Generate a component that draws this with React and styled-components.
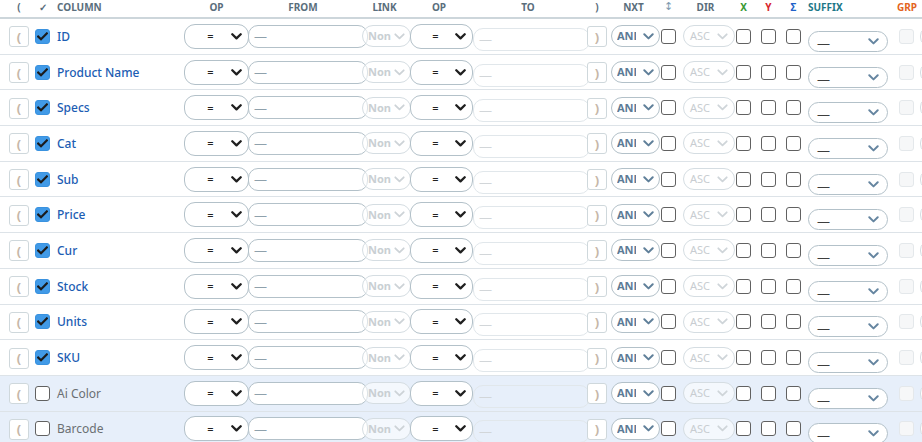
import React from "react";
import styled, { createGlobalStyle, css } from "styled-components";

const GlobalStyle = createGlobalStyle`
  html, body {
    margin: 0;
    padding: 0;
    background: #ffffff;
    overflow: hidden;
  }
  body {
    font-family: "Noto Sans", "Open Sans", Arial, sans-serif;
  }
`;

const gridCols = css`
  display: grid;
  grid-template-columns: 26px 22px 127px 64px 114px 48px 63px 114px 24px 50px 22px 53px 25px 25px 22px 91px 21px 1fr;
  padding-left: 9px;
  align-items: center;
`;

const Table = styled.div`
  width: 922px;
`;

const HeadRow = styled.div`
  ${gridCols};
  height: 17px;
  border-bottom: 2px solid #cdd6db;
  box-sizing: content-box;
`;

const HeadLabel = styled.div`
  width: ${(p) => p.$w}px;
  margin-left: ${(p) => p.$ml || 0}px;
  text-align: ${(p) => p.$align || "center"};
  font-family: ${(p) => (p.$glyph ? '"DejaVu Sans", sans-serif' : "inherit")};
  font-size: ${(p) => (p.$glyph ? 11 : 10)}px;
  font-weight: ${(p) => (p.$glyph ? 400 : 700)};
  line-height: 12px;
  margin-top: -4px;
  color: ${(p) => p.$color || "#5a6e7c"};
  white-space: nowrap;
`;

const Row = styled.div`
  ${gridCols};
  height: 35.7px;
  box-sizing: border-box;
  border-bottom: 1px solid #dde3e8;
  background: ${(p) => (p.$muted ? "#e7effa" : "#ffffff")};
`;

const ParenBtn = styled.div`
  width: 20px;
  height: 21px;
  box-sizing: border-box;
  border: 1px solid #cfd8dc;
  border-radius: 3px;
  background: #ffffff;
  display: flex;
  align-items: center;
  justify-content: center;
  font-size: 13px;
  font-weight: 700;
  color: #c6b7a8;
  margin-top: ${(p) => p.$mt || 0}px;
`;

const Box = styled.div`
  width: 15px;
  height: 15px;
  box-sizing: border-box;
  border-radius: 3px;
  display: flex;
  align-items: center;
  justify-content: center;
  ${(p) =>
    p.$checked
      ? css`
          background: #419ae7;
          border: 1px solid #3a92df;
        `
      : p.$disabled
      ? css`
          background: #f6f7f8;
          border: 1px solid #e4e8eb;
        `
      : css`
          background: #ffffff;
          border: 1.5px solid #616161;
        `}
`;

const ColName = styled.div`
  font-size: 12px;
  font-weight: ${(p) => (p.$muted ? 400 : 500)};
  color: ${(p) => (p.$muted ? "#6b6f73" : "#1c5db3")};
  white-space: nowrap;
`;

const SelectBox = styled.div`
  width: ${(p) => p.$w}px;
  height: ${(p) => p.$h}px;
  margin-top: ${(p) => p.$mt || 0}px;
  box-sizing: border-box;
  border: 1px solid ${(p) => (p.$disabled ? "#d5dde2" : "#b3c1c9")};
  border-radius: ${(p) => p.$r || 11}px;
  background: ${(p) => (p.$disabled ? "rgba(255,255,255,0.55)" : "#ffffff")};
  display: flex;
  align-items: center;
  padding: 0 ${(p) => p.$pr || 5}px 0 ${(p) => p.$pl || 5}px;
  gap: 3px;
  position: relative;
  z-index: 1;
`;

const SelectValue = styled.div`
  flex: ${(p) => (p.$fixed ? "0 0 auto" : "1")};
  width: ${(p) => (p.$fixed ? `${p.$fixed}px` : "auto")};
  overflow: ${(p) => (p.$fixed ? "hidden" : "visible")};
  white-space: nowrap;
  text-align: ${(p) => p.$align || "left"};
  font-size: ${(p) => p.$size || 11}px;
  font-weight: ${(p) => p.$weight || 400};
  color: ${(p) => p.$color || "#222"};
  line-height: 14px;
  margin-top: ${(p) => p.$vt || 0}px;
`;

const Spacer = styled.div`
  flex: 1;
`;

const TextBox = styled.div`
  width: ${(p) => p.$w}px;
  height: 23px;
  margin-top: ${(p) => p.$mt || 0}px;
  box-sizing: border-box;
  border: 1px solid ${(p) => (p.$disabled ? "#e1e7eb" : "#b3c1c9")};
  border-radius: 10px;
  background: ${(p) => (p.$disabled ? "transparent" : "#ffffff")};
  display: flex;
  align-items: ${(p) => (p.$disabled ? "flex-end" : "center")};
  padding: 0 5px;
  padding-bottom: ${(p) => (p.$disabled ? 2 : 0)}px;
  font-size: 13px;
  color: ${(p) => (p.$disabled ? "#d2d6d9" : "#8fa1ac")};
`;

const Edge = styled.div`
  width: 20px;
  height: 21px;
  box-sizing: border-box;
  border: 1px solid #d5dde2;
  border-radius: 10px;
  background: #ffffff;
`;

function Chevron({ color = "#1f1f1f", w = 11, sw = 2.3 }) {
  return (
    <svg width={w} height={7} viewBox="0 0 11 7" style={{ flex: "0 0 auto" }}>
      <path
        d="M1.3 1.3 L5.5 5.4 L9.7 1.3"
        fill="none"
        stroke={color}
        strokeWidth={sw}
        strokeLinecap="round"
        strokeLinejoin="round"
      />
    </svg>
  );
}

function Check({ checked, disabled }) {
  return (
    <Box $checked={checked} $disabled={disabled}>
      {checked && (
        <svg width="11" height="9" viewBox="0 0 11 9">
          <path
            d="M1.2 4.6 L4 7.3 L9.8 1.4"
            fill="none"
            stroke="#1b1b1b"
            strokeWidth="2.1"
            strokeLinecap="square"
          />
        </svg>
      )}
    </Box>
  );
}

const columns = [
  ["ID", true],
  ["Product Name", true],
  ["Specs", true],
  ["Cat", true],
  ["Sub", true],
  ["Price", true],
  ["Cur", true],
  ["Stock", true],
  ["Units", true],
  ["SKU", true],
  ["Ai Color", false],
  ["Barcode", false],
];

function FieldRow({ name, on }) {
  return (
    <Row $muted={!on}>
      <ParenBtn $mt={1}>(</ParenBtn>
      <Check checked={on} />
      <ColName $muted={!on}>{name}</ColName>

      <SelectBox $w={65} $h={25} $pl={8} $pr={6}>
        <SelectValue $align="center" $weight={500}>=</SelectValue>
        <Chevron />
      </SelectBox>
      <TextBox $w={120}>—</TextBox>

      <SelectBox $w={49} $h={22} $disabled $pl={5} $pr={5}>
        <SelectValue $weight={700} $color="#c9cfd3">Non</SelectValue>
        <Chevron color="#cdd3d7" sw={1.8} />
      </SelectBox>
      <SelectBox $w={63} $h={25} $pl={8} $pr={6}>
        <SelectValue $align="center" $weight={500}>=</SelectValue>
        <Chevron />
      </SelectBox>

      <TextBox $w={117} $mt={6} $disabled>
        —
      </TextBox>
      <ParenBtn $mt={1}>)</ParenBtn>

      <SelectBox $w={49} $h={22} $pl={5} $pr={5}>
        <SelectValue $fixed={19} $weight={700} $color="#5c7b96">
          AND
        </SelectValue>
        <Spacer />
        <Chevron color="#5f7f99" sw={2} />
      </SelectBox>
      <Check />

      <SelectBox $w={52} $h={22} $disabled $pl={6} $pr={6}>
        <SelectValue $color="#c8cdd1">ASC</SelectValue>
        <Chevron color="#cfd5d9" sw={1.8} />
      </SelectBox>
      <Check />
      <Check />
      <Check />

      <SelectBox $w={80} $h={21} $mt={10} $pl={8} $pr={8}>
        <SelectValue $color="#3e3e3e" $size={13} $vt={3}>
          —
        </SelectValue>
        <Chevron color="#6585a0" sw={2} />
      </SelectBox>
      <Check disabled />
      <Edge />
    </Row>
  );
}

export default function App() {
  return (
    <>
      <GlobalStyle />
      <Table>
        <HeadRow>
          <HeadLabel $w={20}>(</HeadLabel>
          <HeadLabel $w={15}>✓</HeadLabel>
          <HeadLabel $w={120} $align="left">
            COLUMN
          </HeadLabel>
          <HeadLabel $w={65}>OP</HeadLabel>
          <HeadLabel $w={110}>FROM</HeadLabel>
          <HeadLabel $w={45}>LINK</HeadLabel>
          <HeadLabel $w={58}>OP</HeadLabel>
          <HeadLabel $w={110}>TO</HeadLabel>
          <HeadLabel $w={20}>)</HeadLabel>
          <HeadLabel $w={45}>NXT</HeadLabel>
          <HeadLabel $w={15} $glyph $color="#7d9ab0">
            ↕
          </HeadLabel>
          <HeadLabel $w={45}>DIR</HeadLabel>
          <HeadLabel $w={15} $color="#3a9a35">
            X
          </HeadLabel>
          <HeadLabel $w={15} $color="#d8262e">
            Y
          </HeadLabel>
          <HeadLabel $w={15} $color="#2061c9">
            Σ
          </HeadLabel>
          <HeadLabel $w={60} $align="left" $color="#1d7888">
            SUFFIX
          </HeadLabel>
          <HeadLabel $w={24} $align="left" $ml={-2} $color="#e3641d">
            GRP
          </HeadLabel>
          <span />
        </HeadRow>
        {columns.map(([name, on]) => (
          <FieldRow key={name} name={name} on={on} />
        ))}
      </Table>
    </>
  );
}
